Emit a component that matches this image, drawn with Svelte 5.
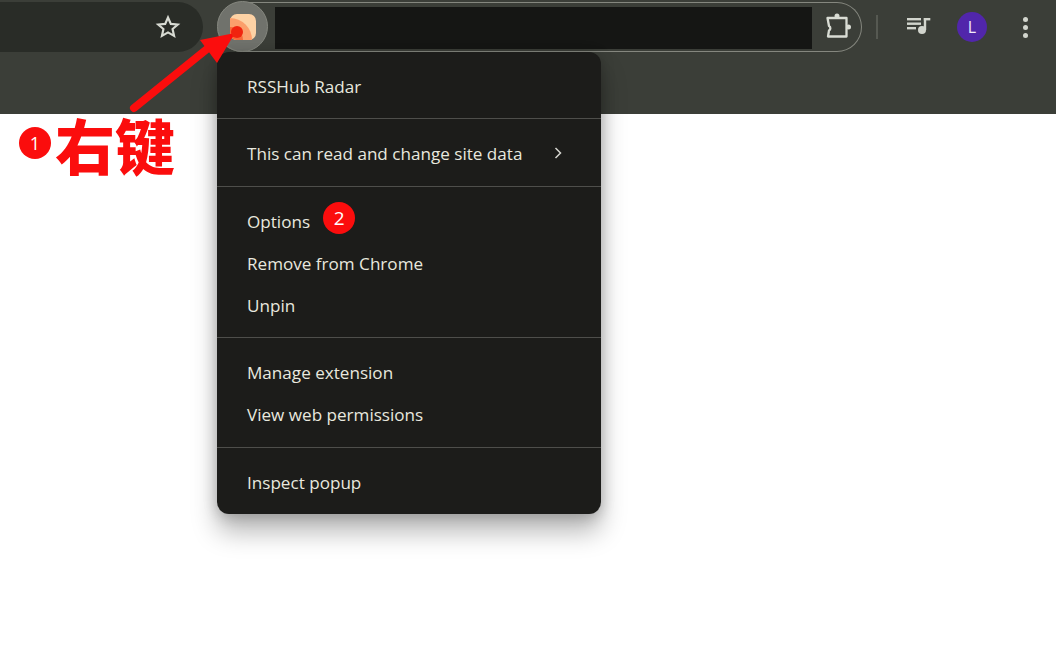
<script>
  const sections = [
    [{ label: 'RSSHub Radar' }],
    [{ label: 'This can read and change site data', more: true }],
    [{ label: 'Options', badge: '2' }, { label: 'Remove from Chrome' }, { label: 'Unpin' }],
    [{ label: 'Manage extension' }, { label: 'View web permissions' }],
    [{ label: 'Inspect popup' }]
  ];
</script>

<div class="page">
  <header class="chrome">
    <div class="toolbar">
      <div class="omnibox">
        <svg class="star" width="26" height="26" viewBox="0 0 24 24" fill="none" stroke="#d8dbd3" stroke-width="2" stroke-linejoin="miter">
          <path d="M12 3.2l2.6 5.9 6.4.6-4.8 4.2 1.4 6.3L12 17l-5.6 3.2 1.4-6.3L3 9.700l6.400-.6z" />
        </svg>
      </div>

      <div class="ext-pill">
        <div class="ext-active">
          <svg width="26" height="26" viewBox="0 0 26 26">
            <rect width="26" height="26" rx="7" fill="#fdd2a5" />
            <path d="M0 4A22 22 0 0 1 22 26H7Q0 26 0 19z" fill="#fb9f6c" />
            <path d="M0 13A13 13 0 0 1 13 26H7Q0 26 0 19z" fill="#f7693a" />
          </svg>
        </div>
        <div class="redacted"></div>
        <svg class="puzzle" width="28" height="28" viewBox="0 0 28 28" fill="none" stroke="#d9dcd4" stroke-width="2.300" stroke-linejoin="round">
          <path d="M2.500 5H21.500V23.500H3l1-6c1.800-1 1.800-3.500 0-4.500z" />
          <circle cx="12" cy="3" r="2.500" fill="#d9dcd4" stroke="none" />
          <circle cx="23.500" cy="14" r="2.500" fill="#d9dcd4" stroke="none" />
        </svg>
      </div>

      <div class="divider"></div>

      <svg class="queue" width="26" height="24" viewBox="0 0 26 24" fill="#d2d5cd">
        <rect x="1" y="3" width="14" height="2.400" />
        <rect x="1" y="7.500" width="14" height="2.400" />
        <rect x="1" y="12" width="9" height="2.400" />
        <circle cx="16" cy="15" r="4" />
        <rect x="17.800" y="3" width="2.400" height="12" />
        <rect x="17.800" y="3" width="6.500" height="2.400" />
      </svg>

      <div class="avatar">L</div>

      <div class="kebab"><span></span><span></span><span></span></div>
    </div>
  </header>

  <nav class="menu">
    {#each sections as items, i}
      {#if i > 0}<hr />{/if}
      <ul>
        {#each items as item}
          <li>
            <span>{item.label}</span>
            {#if item.badge}<b class="badge">{item.badge}</b>{/if}
            {#if item.more}
              <svg class="chevron" width="10" height="14" viewBox="0 0 10 14" fill="none" stroke="#d6d6d0" stroke-width="1.500">
                <path d="M2.500 2l5 5-5 5" />
              </svg>
            {/if}
          </li>
        {/each}
      </ul>
    {/each}
  </nav>

  <!-- annotations on top of the screenshot -->
  <svg class="arrow" width="120" height="100" viewBox="0 0 120 100">
    <path d="M7 91L80 32" stroke="#fb0d0d" stroke-width="8" stroke-linecap="round" />
    <path d="M108 16L73 23 90 46z" fill="#fb0d0d" />
    <circle cx="110" cy="15" r="6" fill="#f0240f" />
  </svg>

  <div class="note">
    <b class="step">1</b>
    <span>右键</span>
  </div>
</div>

<style>
  :global(body) {
    margin: 0;
    background: #fff;
  }

  .page {
    position: relative;
    width: 1056px;
    height: 657px;
    overflow: hidden;
    background: #fff;
    font-family: "Open Sans", "Noto Sans", sans-serif;
  }

  .chrome {
    height: 114px;
    background: #3b3e38;
  }

  .toolbar {
    display: flex;
    align-items: center;
    height: 54px;
  }

  .omnibox {
    display: flex;
    align-items: center;
    justify-content: flex-end;
    box-sizing: border-box;
    width: 203px;
    height: 50px;
    padding-right: 22px;
    background: #292c27;
    border-radius: 0 25px 25px 0;
  }

  .ext-pill {
    display: flex;
    align-items: center;
    box-sizing: border-box;
    width: 645px;
    height: 50px;
    margin-left: 14px;
    border: 1.500px solid #85877f;
    border-left: none;
    border-radius: 25px;
  }

  .ext-active {
    display: flex;
    align-items: center;
    justify-content: center;
    flex: none;
    width: 51px;
    height: 51px;
    margin-top: -1px;
    background: #70726c;
    border: 1px solid #85877f;
    box-sizing: border-box;
    border-radius: 50%;
  }

  .redacted {
    flex: none;
    width: 537px;
    height: 42px;
    margin: 1px 0 0 7px;
    background: #151614;
  }

  .puzzle {
    flex: none;
    margin-left: 13px;
  }

  .divider {
    width: 2px;
    height: 24px;
    margin-left: 14px;
    background: #565952;
  }

  .queue {
    margin-left: 28px;
  }

  .avatar {
    display: flex;
    align-items: center;
    justify-content: center;
    width: 30px;
    height: 30px;
    margin-left: 25px;
    border-radius: 50%;
    background: #5126ab;
    color: #f1ecfb;
    font-size: 16px;
  }

  .kebab {
    display: flex;
    flex-direction: column;
    gap: 3px;
    margin-left: 36px;
  }

  .kebab span {
    width: 5px;
    height: 5px;
    border-radius: 50%;
    background: #d2d5cd;
  }

  .menu {
    position: absolute;
    top: 52px;
    left: 217px;
    width: 384px;
    height: 462px;
    color: #e8e8df;
    background: #1c1c1a;
    border-radius: 12px;
    box-shadow: 0 18px 26px rgba(0, 0, 0, 0.28), 0 2px 14px rgba(0, 0, 0, 0.22);
    font-size: 17.100px;
  }

  .menu ul {
    margin: 0;
    padding: 13px 0 11px;
    list-style: none;
  }

  .menu ul:nth-of-type(2),
  .menu ul:nth-of-type(4) {
    padding-bottom: 12px;
  }

  .menu hr {
    height: 1px;
    margin: 0;
    border: none;
    background: #4e4e4b;
  }

  .menu li {
    display: flex;
    align-items: center;
    height: 42px;
    padding: 0 30px;
  }

  .badge {
    display: flex;
    align-items: center;
    justify-content: center;
    width: 32px;
    height: 32px;
    margin: -6px 0 0 13px;
    border-radius: 50%;
    background: #fb0d0d;
    color: #fff;
    font-size: 19px;
    font-weight: 400;
  }

  .chevron {
    margin-left: auto;
    margin-right: 8px;
  }

  .arrow {
    position: absolute;
    top: 17px;
    left: 127px;
  }

  .note {
    position: absolute;
    top: 104px;
    left: 19px;
    display: flex;
    align-items: center;
    color: #fb0d0d;
    font-family: "Noto Sans CJK SC", sans-serif;
    font-size: 60px;
    font-weight: 900;
    line-height: 80px;
  }

  .step {
    display: flex;
    align-items: center;
    justify-content: center;
    width: 32px;
    height: 32px;
    margin: -3px 4px 0 0;
    border-radius: 50%;
    background: #fb0d0d;
    color: #fff;
    font-family: "Open Sans", sans-serif;
    font-size: 18px;
    font-weight: 400;
  }
</style>
